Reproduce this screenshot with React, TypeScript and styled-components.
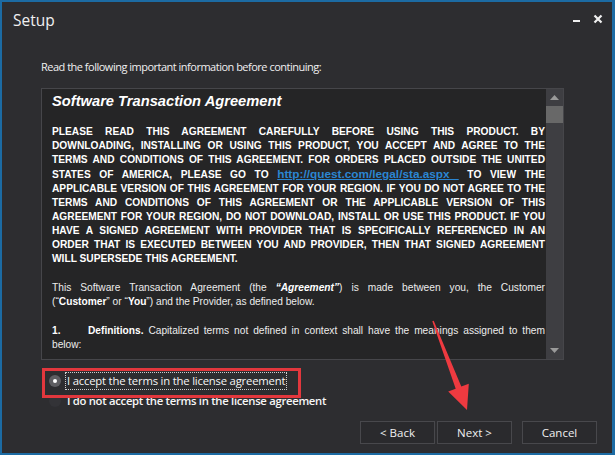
import React from "react";
import styled, { createGlobalStyle } from "styled-components";

const GlobalStyle = createGlobalStyle`
  html, body {
    margin: 0;
    padding: 0;
    background: #2d2d30;
  }
`;

const UI = `"Open Sans", "Noto Sans", sans-serif`;
const DOC = `"Liberation Sans", Arial, sans-serif`;

type Line = { text: React.ReactNode; last?: boolean };

const App = () => {
  const warning: Line[] = [
    { text: "PLEASE READ THIS AGREEMENT CAREFULLY BEFORE USING THIS PRODUCT. BY" },
    { text: "DOWNLOADING, INSTALLING OR USING THIS PRODUCT, YOU ACCEPT AND AGREE TO THE" },
    { text: "TERMS AND CONDITIONS OF THIS AGREEMENT. FOR ORDERS PLACED OUTSIDE THE UNITED" },
    {
      text: (
        <>
          STATES OF AMERICA, PLEASE GO TO <Link>http://quest.com/legal/sta.aspx&nbsp;</Link> TO VIEW THE
        </>
      ),
    },
    { text: "APPLICABLE VERSION OF THIS AGREEMENT FOR YOUR REGION. IF YOU DO NOT AGREE TO THE" },
    { text: "TERMS AND CONDITIONS OF THIS AGREEMENT OR THE APPLICABLE VERSION OF THIS" },
    { text: "AGREEMENT FOR YOUR REGION, DO NOT DOWNLOAD, INSTALL OR USE THIS PRODUCT. IF YOU" },
    { text: "HAVE A SIGNED AGREEMENT WITH PROVIDER THAT IS SPECIFICALLY REFERENCED IN AN" },
    { text: "ORDER THAT IS EXECUTED BETWEEN YOU AND PROVIDER, THEN THAT SIGNED AGREEMENT" },
    { text: "WILL SUPERSEDE THIS AGREEMENT.", last: true },
  ];

  return (
    <>
      <GlobalStyle />
      <Window>
        <TitleBar>
          <Title>Setup</Title>
          <Controls>
            <svg width="9" height="10" viewBox="0 0 9 10">
              <rect x="1" y="6" width="7" height="2" fill="#f0f0f0" />
            </svg>
            <svg width="10" height="10" viewBox="0 0 10 10">
              <path d="M1.5 1.5 L8.5 8.5 M8.5 1.5 L1.5 8.5" stroke="#f0f0f0" strokeWidth="2.2" />
            </svg>
          </Controls>
        </TitleBar>

        <Body>
          <Intro>Read the following important information before continuing:</Intro>

          <LicenseBox>
            <LicenseText>
              <Heading>Software Transaction Agreement</Heading>
              <Block>
                {warning.map((l, i) => (
                  <CapsLine key={i} $last={l.last}>
                    {l.text}
                  </CapsLine>
                ))}
              </Block>
              <Block>
                <PlainLine>
                  This Software Transaction Agreement (the <b><i>“Agreement”</i></b>) is made between you, the Customer
                </PlainLine>
                <PlainLine $last>
                  (“<b>Customer</b>” or “<b>You</b>”) and the Provider, as defined below.
                </PlainLine>
              </Block>
              <Block>
                <PlainLine>
                  <Num>1.</Num>
                  <b>Definitions.</b> Capitalized terms not defined in context shall have the meanings assigned to them
                </PlainLine>
                <PlainLine $last>below:</PlainLine>
              </Block>
            </LicenseText>
            <ScrollBar>
              <ScrollArrow>
                <svg width="9" height="5" viewBox="0 0 9 5">
                  <path d="M0 5 L4.5 0 L9 5 Z" fill="#9a9a9a" />
                </svg>
              </ScrollArrow>
              <Thumb />
              <Track />
              <ScrollArrow>
                <svg width="9" height="5" viewBox="0 0 9 5">
                  <path d="M0 0 L4.5 5 L9 0 Z" fill="#9a9a9a" />
                </svg>
              </ScrollArrow>
            </ScrollBar>
          </LicenseBox>

          <Choices>
            <Choice>
              <Radio $checked />
              <ChoiceLabel $focused>I accept the terms in the license agreement</ChoiceLabel>
            </Choice>
            <Choice>
              <Radio />
              <ChoiceLabel $strong>I do not accept the terms in the license agreement</ChoiceLabel>
            </Choice>
          </Choices>
        </Body>

        <Footer>
          <Button>&lt; Back</Button>
          <Button>Next &gt;</Button>
          <Button $spaced>Cancel</Button>
        </Footer>

        <Highlight />
        <Pointer width="615" height="455" viewBox="0 0 615 455">
          <polygon
            points="432.3,321.2 455.7,388.7 448.2,391.5 467,410 468.8,383.7 461.3,386.5 433.7,320.8"
            fill="#ee3a40"
          />
        </Pointer>
      </Window>
    </>
  );
};

const Window = styled.div`
  position: relative;
  width: 615px;
  height: 455px;
  box-sizing: border-box;
  border: 2px solid #1c6ba3;
  border-right-width: 3px;
  background: #2d2d30;
  display: flex;
  flex-direction: column;
  overflow: hidden;
`;

const TitleBar = styled.div`
  height: 36px;
  display: flex;
  align-items: center;
  justify-content: space-between;
  padding: 0 9px 0 11px;
`;

const Title = styled.div`
  font-family: ${UI};
  font-size: 15.5px;
  color: #f0f0f0;
`;

const Controls = styled.div`
  display: flex;
  align-items: center;
  gap: 12px;
  margin-top: -2px;
`;

const Body = styled.div`
  padding-left: 39px;
  display: flex;
  flex-direction: column;
`;

const Intro = styled.div`
  margin-top: 21px;
  font-family: ${UI};
  font-size: 11px;
  letter-spacing: -0.5px;
  line-height: 16px;
  color: #f0f0f0;
`;

const LicenseBox = styled.div`
  margin-top: 13px;
  width: 523px;
  height: 272px;
  box-sizing: border-box;
  border: 1px solid #46464a;
  background: #252526;
  display: flex;
`;

const LicenseText = styled.div`
  flex: 1;
  overflow: hidden;
  padding: 3px 1px 0 10px;
  color: #ffffff;
  font-family: ${DOC};
`;

const Heading = styled.div`
  font-size: 14.7px;
  line-height: 18px;
  font-weight: bold;
  font-style: italic;
  margin-bottom: 15px;
`;

const Block = styled.div`
  margin-bottom: 15px;
`;

const CapsLine = styled.div<{ $last?: boolean }>`
  font-size: 10.2px;
  font-weight: bold;
  line-height: 14px;
  text-align: justify;
  text-align-last: ${({ $last }) => ($last ? "left" : "justify")};
`;

const PlainLine = styled.div<{ $last?: boolean }>`
  font-size: 10.2px;
  line-height: 14px;
  color: #ececec;
  text-align: justify;
  text-align-last: ${({ $last }) => ($last ? "left" : "justify")};

  b {
    color: #ffffff;
  }
`;

const Num = styled.b`
  display: inline-block;
  width: 36px;
  text-align-last: left;
`;

const Link = styled.span`
  color: #2b86d2;
  font-size: 11.8px;
  text-decoration: underline;
`;

const ScrollBar = styled.div`
  width: 17px;
  background: #3e3e42;
  display: flex;
  flex-direction: column;
`;

const ScrollArrow = styled.div`
  height: 17px;
  display: flex;
  align-items: center;
  justify-content: center;
`;

const Thumb = styled.div`
  height: 17px;
  background: #686868;
`;

const Track = styled.div`
  flex: 1;
`;

const Choices = styled.div`
  margin-top: 11px;
  display: flex;
  flex-direction: column;
`;

const Choice = styled.div`
  height: 20px;
  display: flex;
  align-items: center;
  padding-left: 8px;
`;

const Radio = styled.span<{ $checked?: boolean }>`
  width: 12px;
  height: 12px;
  border-radius: 50%;
  box-sizing: border-box;
  background: ${({ $checked }) => ($checked ? "#5e5e62" : "#333337")};
  display: flex;
  align-items: center;
  justify-content: center;
  margin-right: 4px;

  &::after {
    content: "";
    width: 4px;
    height: 4px;
    border-radius: 50%;
    background: ${({ $checked }) => ($checked ? "#ffffff" : "transparent")};
  }
`;

const ChoiceLabel = styled.span<{ $focused?: boolean; $strong?: boolean }>`
  font-family: ${UI};
  font-size: 11.3px;
  letter-spacing: ${({ $strong }) => ($strong ? "-0.3px" : "-0.2px")};
  font-weight: ${({ $strong }) => ($strong ? 600 : 400)};
  line-height: 16px;
  color: #f6f6f6;
  padding: 0 1px;
  border: 1px dotted ${({ $focused }) => ($focused ? "#cfcfcf" : "transparent")};
`;

const Footer = styled.div`
  margin-top: 10px;
  display: flex;
  justify-content: flex-end;
  padding-right: 15px;
  gap: 2px;
`;

const Button = styled.button<{ $spaced?: boolean }>`
  width: 75px;
  height: 23px;
  margin-left: ${({ $spaced }) => ($spaced ? "8px" : "0")};
  background: #2a2a2d;
  border: 1px solid #48484c;
  color: #f0f0f0;
  font-family: ${UI};
  font-size: 11.5px;
  padding: 0;
`;

const Highlight = styled.div`
  position: absolute;
  left: 40px;
  top: 366px;
  width: 259px;
  height: 30px;
  border: 3px solid #e2373d;
  box-sizing: border-box;
  pointer-events: none;
`;

const Pointer = styled.svg`
  position: absolute;
  left: -2px;
  top: -2px;
  pointer-events: none;
`;

export default App;
